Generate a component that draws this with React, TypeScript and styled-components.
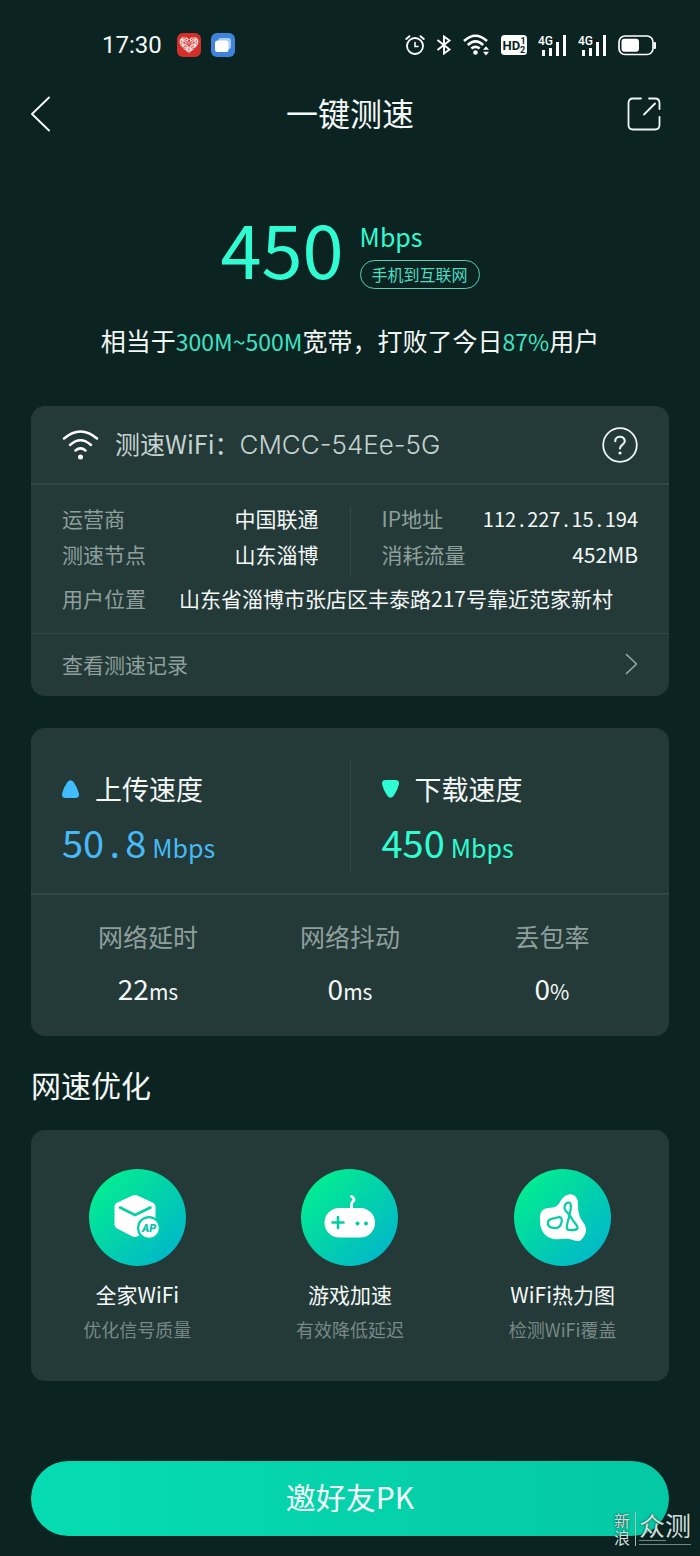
import React from "react";
import styled, { createGlobalStyle } from "styled-components";

const mint = "#2ffcd2";
const sky = "#48b9f7";
const line = "#314946";
const muted = "#8f9f9c";

const GlobalStyle = createGlobalStyle`
  * { box-sizing: border-box; }
  body {
    margin: 0;
    background: #0b2422;
    color: #f4f8f7;
    font-family: "Noto Sans CJK SC", sans-serif;
    font-weight: 400;
  }
  h1, h2, h3, p, dl, dt, dd { margin: 0; font-weight: 400; }
  button { padding: 0; border: 0; background: none; color: inherit; font: inherit; cursor: pointer; }
  a { color: inherit; text-decoration: none; }
  svg { display: block; flex: none; }
`;

const Page = styled.div`
  position: relative;
  padding: 0 31px 20px;
`;

const StatusBar = styled.div`
  display: flex;
  align-items: center;
  justify-content: space-between;
  height: 90px;
  padding: 0 13px 0 71px;
`;

const StatusGroup = styled.div<{ $gap: number }>`
  display: flex;
  align-items: center;
  gap: ${(p) => p.$gap}px;
`;

const Clock = styled.time`
  margin-right: 5px;
  font: 24px/30px Roboto, sans-serif;
`;

const TitleBar = styled.header`
  display: grid;
  grid-template-columns: 1fr auto 1fr;
  align-items: center;
  height: 48px;
`;

const Title = styled.h1`
  padding-bottom: 4px;
  font-size: 32px;
  line-height: 44px;
`;

const IconButton = styled.button`
  display: flex;
  align-items: center;
`;

const ShareButton = styled(IconButton)`
  justify-self: end;
  margin-right: 8px;
`;

const Hero = styled.section`
  display: flex;
  justify-content: center;
  align-items: center;
  gap: 16px;
  height: 84px;
  margin-top: 72px;
  color: ${mint};
`;

const HeroNumber = styled.strong`
  padding-bottom: 10px;
  font-size: 74px;
  font-weight: 400;
  line-height: 74px;
`;

const HeroSide = styled.div`
  display: flex;
  flex-direction: column;
  align-items: flex-start;
  gap: 6px;
  padding-top: 3px;
`;

const HeroUnit = styled.span`
  font-size: 25px;
  line-height: 36px;
`;

const Unit = styled.span`
  font-size: 25px;
  line-height: 1;
`;

const Pill = styled.span`
  padding: 0 11px 1px;
  border: 1px solid #5fcdb6;
  border-radius: 15px;
  color: #4fdcc0;
  font-size: 16px;
  line-height: 26px;
`;

const Summary = styled.p`
  margin: 27px 0 47px;
  text-align: center;
  font-size: 25px;
  line-height: 38px;
`;

const Accent = styled.span`
  color: #3fe3c2;
  font-size: 23px;
  line-height: 1;
`;

const Card = styled.section`
  border-radius: 14px;
  background: #233a38;
`;

const WifiRow = styled.div`
  display: flex;
  align-items: center;
  height: 79px;
  padding: 0 31px;
  border-bottom: 2px solid ${line};
`;

const WifiName = styled.h2`
  flex: 1;
  margin-left: 16px;
  padding-bottom: 4px;
  color: #c6d2d0;
  font-size: 25px;
  line-height: 36px;
`;

const Ssid = styled.span`
  font-family: Inter, sans-serif;
  font-size: 26px;
  font-weight: 300;
  line-height: 1;
`;

const Details = styled.div`
  padding: 15px 31px 17px;
  border-bottom: 1px solid ${line};
`;

const Split = styled.div`
  display: grid;
  grid-template-columns: 1fr 1px 1fr;
  column-gap: 31px;
`;

const Divider = styled.div<{ $top: number }>`
  margin-top: ${(p) => p.$top}px;
  background: ${line};
`;

const DetailList = styled.dl`
  padding-bottom: 4px;
`;

const DetailRow = styled.div<{ $wide?: boolean }>`
  display: flex;
  justify-content: ${(p) => (p.$wide ? "flex-start" : "space-between")};
  gap: ${(p) => (p.$wide ? 33 : 0)}px;
  margin-top: ${(p) => (p.$wide ? 4 : 0)}px;
  font-size: 21px;
  line-height: 36px;
  white-space: nowrap;
`;

const Term = styled.dt`
  color: ${muted};
`;

const Value = styled.dd`
  color: #f4f8f7;
`;

const IpText = styled.span`
  font-size: 20px;
  line-height: 1;
`;

const Dot = styled.span<{ $w: number }>`
  display: inline-block;
  width: ${(p) => p.$w}px;
  line-height: 1;
  text-align: center;
`;

const RecordLink = styled.a`
  display: flex;
  align-items: center;
  justify-content: space-between;
  height: 62px;
  padding: 0 31px 2px;
  color: ${muted};
  font-size: 21px;
`;

const SpeedCard = styled(Card)`
  margin-top: 32px;
`;

const SpeedTop = styled.div`
  padding: 33px 31px 20px;
  border-bottom: 2px solid ${line};
`;

const SpeedBlock = styled.div`
  padding: 10px 0 7px;
`;

const SpeedTitle = styled.h3`
  display: flex;
  align-items: center;
  gap: 16px;
  font-size: 27px;
  line-height: 36px;
`;

const SpeedValue = styled.p<{ $color: string }>`
  display: flex;
  align-items: baseline;
  gap: 6px;
  height: 48px;
  margin-top: 11px;
  color: ${(p) => p.$color};
  font-size: 38px;
  line-height: 48px;
`;

const Stats = styled.dl`
  display: grid;
  grid-template-columns: repeat(3, 1fr);
  padding: 23px 16px 26px;
  text-align: center;
`;

const StatName = styled.dt`
  color: ${muted};
  font-size: 25px;
  line-height: 36px;
`;

const StatValue = styled.dd`
  margin-top: 12px;
  font-size: 28px;
  line-height: 44px;
`;

const StatUnit = styled.span`
  font-size: 21px;
  line-height: 1;
`;

const SectionTitle = styled.h2`
  margin: 28px 0 26px;
  font-size: 30px;
  line-height: 40px;
`;

const FeatureCard = styled(Card)`
  display: grid;
  grid-template-columns: repeat(3, 1fr);
  padding: 39px 0;
`;

const Feature = styled.a`
  display: flex;
  flex-direction: column;
  align-items: center;
`;

const FeatureIcon = styled.span`
  width: 97px;
  height: 97px;
  border-radius: 50%;
  background: linear-gradient(135deg, #03f08f 8%, #02d1ab 50%, #00b4cf 96%);
`;

const FeatureName = styled.span`
  margin-top: 13px;
  font-size: 21px;
  line-height: 30px;
`;

const FeatureNote = styled.span`
  margin: 8px 0 1px;
  color: #788886;
  font-size: 18px;
  line-height: 24px;
`;

const InviteButton = styled.button`
  && {
    display: block;
    width: 100%;
    height: 75px;
    margin-top: 80px;
    padding-bottom: 6px;
    border-radius: 38px;
    background: linear-gradient(90deg, #06dcb1, #04c8a4);
    color: #f4fffc;
    font-size: 30px;
  }
`;

const Watermark = styled.div`
  position: absolute;
  right: 9px;
  bottom: 10px;
  display: flex;
  align-items: stretch;
  gap: 4px;
  color: #d3dedc;
  text-shadow: 0 0 2px #0b2422;
`;

const MarkSide = styled.span`
  width: 17px;
  padding-right: 1px;
  font-size: 16px;
  line-height: 17px;
`;

const MarkMain = styled.span`
  padding-left: 3px;
  border-left: 1px solid #a9bcb8;
  font-size: 26px;
  line-height: 25px;
`;

const MarkLine = styled.span<{ $w: number }>`
  display: block;
  width: ${(p) => p.$w}px;
  height: 1px;
  margin-top: 3px;
  background: #6f8884;
`;

const HeartApp = () => (
  <svg width="24" height="24" viewBox="0 0 24 24">
    <rect width="24" height="24" rx="6" fill="#d3302b" />
    <path d="M12 20C8 17 2.500 13 2.500 8.500C2.500 3.500 9 2.500 12 6.500C15 2.500 21.500 3.500 21.500 8.500C21.500 13 16 17 12 20Z" fill="#f6d3d0" />
    <path d="M4 8L18 16M6 5L20 11M20 8L6 15M18 5L4 11M8 4V16M12 7V19M16 4V16" stroke="#d3302b" strokeWidth="0.9" strokeDasharray="1.6 1.2" />
    <circle cx="12" cy="10.500" r="1.800" fill="none" stroke="#d3302b" />
  </svg>
);

const WindowsApp = () => (
  <svg width="24" height="24" viewBox="0 0 24 24">
    <rect width="24" height="24" rx="6" fill="#3f83da" />
    <rect x="7" y="5" width="13" height="11" rx="2.500" fill="#a9cbf5" />
    <rect x="4" y="7.500" width="13.500" height="11.500" rx="2.500" fill="#fff" />
  </svg>
);

const AlarmIcon = () => (
  <svg width="20" height="20" viewBox="0 0 20 20" fill="none" stroke="#fff" strokeLinecap="round">
    <circle cx="10" cy="11" r="8" strokeWidth="1.800" />
    <path d="M1.200 4L4.500 1.200M18.800 4L15.500 1.200" strokeWidth="1.800" />
    <path d="M10 7.500V11.500H13" strokeWidth="1.600" />
  </svg>
);

const BluetoothIcon = () => (
  <svg width="16" height="20" viewBox="0 0 16 20" fill="none" stroke="#fff" strokeWidth="1.900">
    <path d="M1.500 5L13.500 14.500L8 18.500V1.500L13.500 5.500L1.500 15" />
  </svg>
);

const StatusWifi = () => (
  <svg width="27" height="22" viewBox="0 0 27 22" fill="none" stroke="#fff" strokeWidth="2.600">
    <path d="M1 7Q12.500 -3.500 24 7" />
    <path d="M4.800 11Q12.500 3.800 20.200 11" />
    <path d="M8.300 14.600Q12.500 11 16.700 14.600" />
    <circle cx="12.500" cy="18.500" r="2.300" fill="#fff" stroke="none" />
    <path d="M20 15.800L23 12.200L26 15.800ZM20 17.800L23 21.400L26 17.800Z" fill="#fff" stroke="none" />
  </svg>
);

const HdIcon = () => (
  <svg width="26" height="20" viewBox="0 0 26 20" fontFamily="Roboto, sans-serif" fontWeight="700" fill="#0b2422">
    <rect width="26" height="20" rx="3.500" fill="#fff" />
    <text x="1.500" y="15" fontSize="13">HD</text>
    <text x="19.500" y="9" fontSize="9">1</text>
    <text x="19" y="17.500" fontSize="9">2</text>
  </svg>
);

const SignalIcon = () => (
  <svg width="29" height="21" viewBox="0 0 29 21" fill="#fff">
    <text x="0" y="10" fontSize="12" fontFamily="Roboto, sans-serif" fontWeight="500">4G</text>
    <rect x="4" y="15" width="3" height="6" />
    <rect x="11" y="13" width="3" height="8" />
    <rect x="18" y="7" width="3" height="14" />
    <rect x="25" y="0" width="3" height="21" />
  </svg>
);

const BatteryIcon = () => (
  <svg width="38" height="21" viewBox="0 0 38 21">
    <rect x="1" y="1" width="34" height="18.500" rx="6" fill="none" stroke="#fff" strokeWidth="1.700" />
    <rect x="3.500" y="3.800" width="17.500" height="13" rx="3" fill="#fff" />
    <rect x="36" y="7" width="2" height="7" rx="1" fill="#fff" />
  </svg>
);

const BackIcon = () => (
  <svg width="20" height="36" viewBox="0 0 20 36" fill="none" stroke="#fff" strokeWidth="1.800" strokeLinecap="round" strokeLinejoin="round">
    <path d="M18 1.500L1 18L18 34.500" />
  </svg>
);

const ShareIcon = () => (
  <svg width="34" height="34" viewBox="0 0 34 34" fill="none" stroke="#f1f5f4" strokeWidth="1.800" strokeLinecap="round">
    <path d="M14 1.500H6Q1.500 1.500 1.500 6V28Q1.500 32.500 6 32.500H28Q32.500 32.500 32.500 28V20" />
    <path d="M22 1.500H28Q32.500 1.500 32.500 6V12" />
    <path d="M17 17.500L28 6.500" />
  </svg>
);

const WifiIcon = () => (
  <svg width="37" height="31" viewBox="0 0 37 31" fill="none" stroke="#fff" strokeWidth="2.500" strokeLinecap="round">
    <path d="M2 9.500Q18.500 -4.500 35 9.500" />
    <path d="M8 16Q18.500 6.500 29 16" />
    <path d="M13.500 21.500Q18.500 17.300 23.500 21.500" />
    <circle cx="18.500" cy="28" r="2.500" fill="#fff" stroke="none" />
  </svg>
);

const HelpIcon = () => (
  <svg width="36" height="36" viewBox="0 0 36 36" fill="none" stroke="#eef4f3" strokeLinecap="round">
    <circle cx="18" cy="18" r="16.800" strokeWidth="1.800" />
    <path d="M13.200 14.200C13.200 8.300 22.800 8.300 22.800 14.200C22.800 17.600 18 17.600 18 21.500" strokeWidth="2.100" />
    <circle cx="18" cy="26" r="1.600" fill="#eef4f3" stroke="none" />
  </svg>
);

const ChevronIcon = () => (
  <svg width="13" height="22" viewBox="0 0 13 22" fill="none" stroke="#9aa9a6" strokeWidth="1.600" strokeLinecap="round" strokeLinejoin="round">
    <path d="M1.500 1.500L11.500 11L1.500 20.500" />
  </svg>
);

const UpIcon = () => (
  <svg width="17" height="18" viewBox="0 0 17 18" fill="#41bdff">
    <path d="M5.300 2.200Q8.500 -1.600 11.700 2.200Q15.600 7.500 17 14Q17.200 18 13.500 18H3.500Q-0.200 18 0 14Q1.400 7.500 5.300 2.200Z" />
  </svg>
);

const DownIcon = () => (
  <svg width="17" height="18" viewBox="0 0 17 18" fill={mint}>
    <path d="M5.300 15.800Q8.500 19.600 11.700 15.800Q15.600 10.500 17 4Q17.200 0 13.500 0H3.500Q-0.200 0 0 4Q1.400 10.500 5.300 15.800Z" />
  </svg>
);

const BoxIcon = () => (
  <svg width="97" height="97" viewBox="0 0 97 97">
    <path d="M43.500 26.600Q46 25.400 48.500 26.600L64 33.800Q66.500 35 66.500 37.500V58L48 67.500Q46 68.500 43.500 67.500L28 59.500Q25.500 58 25.500 55.500V37.500Q25.500 35 28 33.800Z" fill="#fff" />
    <path d="M31 38.500L46 46L61.500 38.500" fill="none" stroke="#05cfa4" strokeWidth="2.600" strokeLinecap="round" />
    <circle cx="60" cy="59" r="12" fill="#04cdae" />
    <circle cx="60" cy="59" r="9.800" fill="#fff" />
    <text x="60" y="63" textAnchor="middle" fontFamily="Roboto, sans-serif" fontSize="11" fontWeight="900" fontStyle="italic" fill="#03c3ad">AP</text>
  </svg>
);

const GamepadIcon = () => (
  <svg width="97" height="97" viewBox="0 0 97 97">
    <path d="M50.500 40V35.500Q50.500 33.500 52 32.500Q53.800 31 52.500 29.200Q51.500 28 50.500 27.500" fill="none" stroke="#fff" strokeWidth="2.800" strokeLinecap="round" />
    <rect x="23.500" y="39" width="50.500" height="29.500" rx="14.750" fill="#fff" />
    <path d="M31.500 53.500H42.500M37 48V59" stroke="#04cda6" strokeWidth="2.600" strokeLinecap="round" />
    <circle cx="56.500" cy="54.500" r="2" fill="#04cda6" />
    <circle cx="65" cy="54.500" r="2" fill="#04c8b0" />
  </svg>
);

const HeatmapIcon = () => (
  <svg width="97" height="97" viewBox="0 0 97 97" fill="none" stroke="#04cda8" strokeWidth="2.200">
    <path d="M55 25.500C60 24.500 64 29 64 34C64 39 64 43 66 48C68 53 72 55 72 61C72 65 70 67 68 70C65 74 60 71 55 70C49 69 42 72 35 68.500C28 65 26 58 26 51C25.500 43 28 39.500 35 39C40 38.500 43 38 46 33C48.500 29 50 26.500 55 25.500Z" fill="#fff" stroke="none" />
    <path d="M34 53C35 49 40 50 43 48.500C47 47 48.500 50 47.500 53.500C46.500 58 43 59.500 39.500 59C35.500 58.500 33.300 56.500 34 53Z" />
    <path d="M54.500 33.500C58 33.500 57 40 55.500 46C54.200 52 52 57 53 60C54.500 61.800 62 61.500 63.500 59.500C64.500 57 60 54 57.500 49C55 44 50 42 50.500 38.500C51 35 52.500 33.500 54.500 33.500Z" />
  </svg>
);

const features = [
  { name: "全家WiFi", note: "优化信号质量", Icon: BoxIcon },
  { name: "游戏加速", note: "有效降低延迟", Icon: GamepadIcon },
  { name: "WiFi热力图", note: "检测WiFi覆盖", Icon: HeatmapIcon },
];

const stats = [
  { name: "网络延时", value: "22", unit: "ms" },
  { name: "网络抖动", value: "0", unit: "ms" },
  { name: "丢包率", value: "0", unit: "%" },
];

const Dotted = ({ text, width }: { text: string; width: number }) => (
  <>
    {text.split(".").map((part, i) => (
      <React.Fragment key={i}>
        {i > 0 && <Dot $w={width}>.</Dot>}
        {part}
      </React.Fragment>
    ))}
  </>
);

export default function App() {
  return (
    <Page>
      <GlobalStyle />
      <StatusBar>
        <StatusGroup $gap={10}>
          <Clock>17:30</Clock>
          <HeartApp />
          <WindowsApp />
        </StatusGroup>
        <StatusGroup $gap={11}>
          <AlarmIcon />
          <BluetoothIcon />
          <StatusWifi />
          <HdIcon />
          <SignalIcon />
          <SignalIcon />
          <BatteryIcon />
        </StatusGroup>
      </StatusBar>

      <TitleBar>
        <IconButton aria-label="返回"><BackIcon /></IconButton>
        <Title>一键测速</Title>
        <ShareButton aria-label="分享"><ShareIcon /></ShareButton>
      </TitleBar>

      <Hero>
        <HeroNumber>450</HeroNumber>
        <HeroSide>
          <HeroUnit>Mbps</HeroUnit>
          <Pill>手机到互联网</Pill>
        </HeroSide>
      </Hero>
      <Summary>
        相当于<Accent>300M~500M</Accent>宽带，打败了今日<Accent>87%</Accent>用户
      </Summary>

      <Card>
        <WifiRow>
          <WifiIcon />
          <WifiName>测速WiFi：<Ssid>CMCC-54Ee-5G</Ssid></WifiName>
          <IconButton aria-label="帮助"><HelpIcon /></IconButton>
        </WifiRow>
        <Details>
          <Split>
            <DetailList>
              <DetailRow><Term>运营商</Term><Value>中国联通</Value></DetailRow>
              <DetailRow><Term>测速节点</Term><Value>山东淄博</Value></DetailRow>
            </DetailList>
            <Divider $top={6} />
            <DetailList>
              <DetailRow>
                <Term>IP地址</Term>
                <Value><IpText><Dotted text="112.227.15.194" width={11} /></IpText></Value>
              </DetailRow>
              <DetailRow><Term>消耗流量</Term><Value>452MB</Value></DetailRow>
            </DetailList>
          </Split>
          <dl>
            <DetailRow $wide>
              <Term>用户位置</Term>
              <Value>山东省淄博市张店区丰泰路217号靠近范家新村</Value>
            </DetailRow>
          </dl>
        </Details>
        <RecordLink href="#records">查看测速记录<ChevronIcon /></RecordLink>
      </Card>

      <SpeedCard>
        <SpeedTop>
          <Split>
            <SpeedBlock>
              <SpeedTitle><UpIcon />上传速度</SpeedTitle>
              <SpeedValue $color={sky}>
                <span><Dotted text="50.8" width={21} /></span>
                <Unit>Mbps</Unit>
              </SpeedValue>
            </SpeedBlock>
            <Divider $top={0} />
            <SpeedBlock>
              <SpeedTitle><DownIcon />下载速度</SpeedTitle>
              <SpeedValue $color={mint}>
                <span>450</span>
                <Unit>Mbps</Unit>
              </SpeedValue>
            </SpeedBlock>
          </Split>
        </SpeedTop>
        <Stats>
          {stats.map((s) => (
            <div key={s.name}>
              <StatName>{s.name}</StatName>
              <StatValue>{s.value}<StatUnit>{s.unit}</StatUnit></StatValue>
            </div>
          ))}
        </Stats>
      </SpeedCard>

      <SectionTitle>网速优化</SectionTitle>
      <FeatureCard>
        {features.map(({ name, note, Icon }) => (
          <Feature key={name} href="#feature">
            <FeatureIcon><Icon /></FeatureIcon>
            <FeatureName>{name}</FeatureName>
            <FeatureNote>{note}</FeatureNote>
          </Feature>
        ))}
      </FeatureCard>

      <InviteButton>邀好友PK</InviteButton>

      <Watermark>
        <MarkSide>新浪</MarkSide>
        <MarkMain>
          众测
          <MarkLine $w={27} />
          <MarkLine $w={52} />
        </MarkMain>
      </Watermark>
    </Page>
  );
}
